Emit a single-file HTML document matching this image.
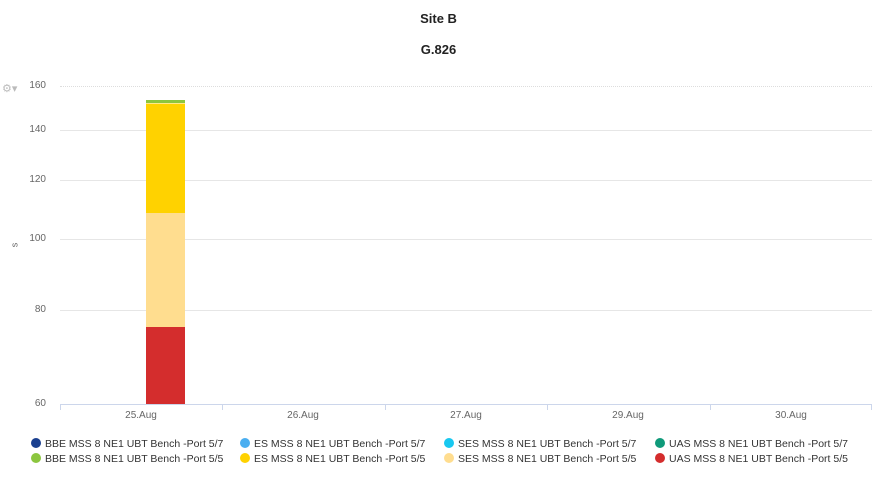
<!DOCTYPE html><html><head><style>
body{margin:0;width:877px;height:481px;background:#fff;font-family:"Liberation Sans",sans-serif;position:relative;overflow:hidden}
.a{position:absolute}
.t{font-weight:bold;font-size:13px;color:#222;width:877px;text-align:center;left:0}
.g{position:absolute;left:60px;width:812px;height:1px;background:#e6e6e6}
.y{position:absolute;font-size:10px;color:#666;width:46px;text-align:right;left:0}
.x{position:absolute;font-size:10px;color:#666;width:162px;text-align:center;top:410px}
.l{position:absolute;font-size:10.5px;color:#333;white-space:nowrap}
.l i{display:inline-block;width:10px;height:10px;border-radius:50%;vertical-align:-1px;margin-right:4px}
</style></head><body>
<div class="a t" style="top:11px">Site B</div>
<div class="a t" style="top:42px">G.826</div>
<div class="a" style="left:2px;top:82px;font-size:11px;color:#bbb">⚙▾</div>
<div class="g" style="top:86px;background:none;border-top:1px dotted #ddd"></div>
<div class="g" style="top:130px"></div><div class="g" style="top:180px"></div>
<div class="g" style="top:239px"></div><div class="g" style="top:310px"></div>
<div class="g" style="top:404px;background:#ccd6eb"></div>
<div class="y" style="top:80px">160</div><div class="y" style="top:124px">140</div>
<div class="y" style="top:174px">120</div><div class="y" style="top:233px">100</div>
<div class="y" style="top:304px">80</div><div class="y" style="top:398px">60</div>
<div class="a" style="left:12px;top:240px;font-size:9px;color:#666;transform:rotate(-90deg)">s</div>
<div class="a" style="left:146px;top:100px;width:39px;height:3px;background:#8cc63f"></div>
<div class="a" style="left:146px;top:103px;width:39px;height:109px;background:#ffd200;border-top:1px solid #ffe98a"></div>
<div class="a" style="left:146px;top:213px;width:39px;height:114px;background:#ffdd8f"></div>
<div class="a" style="left:146px;top:327px;width:39px;height:77px;background:#d42d2d"></div>
<div class="a" style="left:60px;top:404px;width:1px;height:6px;background:#ccd6eb"></div>
<div class="a" style="left:222px;top:404px;width:1px;height:6px;background:#ccd6eb"></div>
<div class="a" style="left:385px;top:404px;width:1px;height:6px;background:#ccd6eb"></div>
<div class="a" style="left:547px;top:404px;width:1px;height:6px;background:#ccd6eb"></div>
<div class="a" style="left:710px;top:404px;width:1px;height:6px;background:#ccd6eb"></div>
<div class="a" style="left:871px;top:404px;width:1px;height:6px;background:#ccd6eb"></div>
<div class="x" style="left:60px">25.Aug</div><div class="x" style="left:222px">26.Aug</div>
<div class="x" style="left:385px">27.Aug</div><div class="x" style="left:547px">29.Aug</div>
<div class="x" style="left:710px">30.Aug</div>
<div class="l" style="left:31px;top:438px"><i style="background:#1a3f8f"></i>BBE MSS 8 NE1 UBT Bench -Port 5/7</div>
<div class="l" style="left:240px;top:438px"><i style="background:#4aaef0"></i>ES MSS 8 NE1 UBT Bench -Port 5/7</div>
<div class="l" style="left:444px;top:438px"><i style="background:#18c8f0"></i>SES MSS 8 NE1 UBT Bench -Port 5/7</div>
<div class="l" style="left:655px;top:438px"><i style="background:#0f9a7a"></i>UAS MSS 8 NE1 UBT Bench -Port 5/7</div>
<div class="l" style="left:31px;top:453px"><i style="background:#8cc63f"></i>BBE MSS 8 NE1 UBT Bench -Port 5/5</div>
<div class="l" style="left:240px;top:453px"><i style="background:#ffd200"></i>ES MSS 8 NE1 UBT Bench -Port 5/5</div>
<div class="l" style="left:444px;top:453px"><i style="background:#ffdd8f"></i>SES MSS 8 NE1 UBT Bench -Port 5/5</div>
<div class="l" style="left:655px;top:453px"><i style="background:#d42d2d"></i>UAS MSS 8 NE1 UBT Bench -Port 5/5</div>
</body></html>
